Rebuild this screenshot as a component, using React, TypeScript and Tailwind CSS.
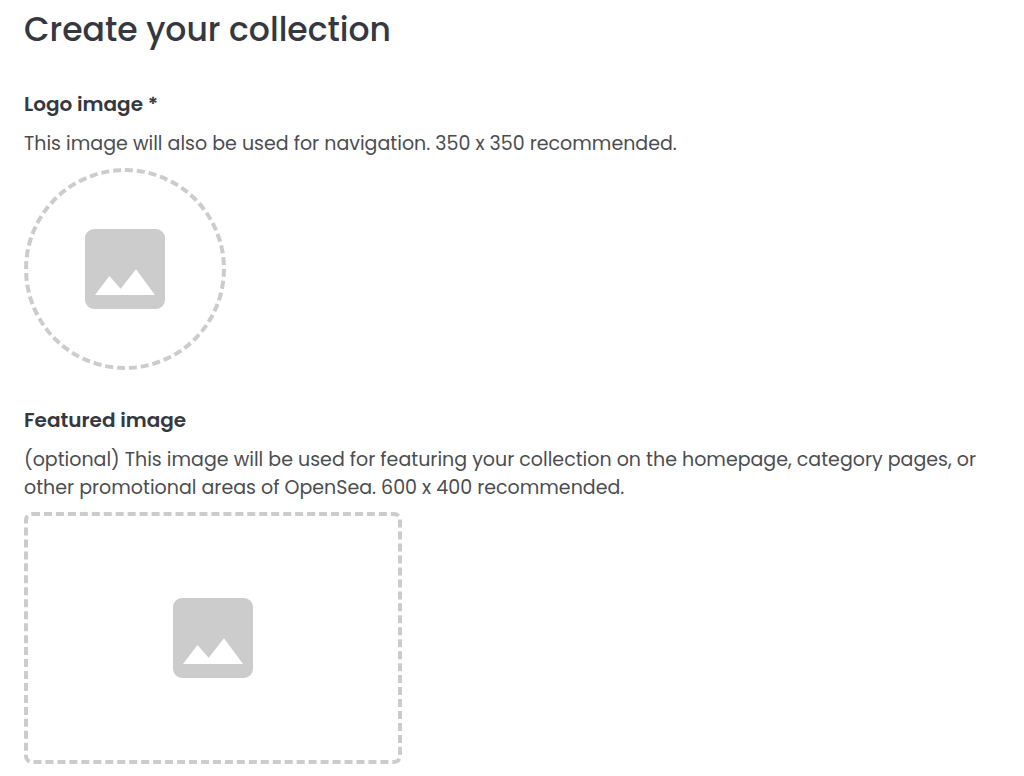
import React, { useRef } from "react";

function ImageIcon() {
  return (
    <svg viewBox="0 0 80 80" className="h-20 w-20" fill="#cccccc" aria-hidden="true">
      <path
        fillRule="evenodd"
        d="M9 0H71A9 9 0 0 1 80 9V71A9 9 0 0 1 71 80H9A9 9 0 0 1 0 71V9A9 9 0 0 1 9 0ZM10 66H70L51 40.3L35.7 59.7L24.4 47Z"
      />
    </svg>
  );
}

interface ImageFieldProps {
  id: string;
  title: string;
  hint: string;
  required?: boolean;
  shape: string;
}

function ImageField({ id, title, hint, required, shape }: ImageFieldProps) {
  const fileInput = useRef<HTMLInputElement>(null);

  return (
    <section className="flex flex-col items-start">
      <label htmlFor={id} className="text-[20px] leading-8 font-semibold text-[#353840]">
        {title}
        {required && " *"}
      </label>
      <p id={`${id}-hint`} className="mt-2.5 text-[19px] leading-7 text-[#4b4d50]">
        {hint}
      </p>
      <button
        id={id}
        type="button"
        aria-describedby={`${id}-hint`}
        onClick={() => fileInput.current?.click()}
        className={`mt-2.5 flex max-w-full cursor-pointer items-center justify-center border-4 border-dashed border-[#cccccc] ${shape}`}
      >
        <ImageIcon />
      </button>
      <input ref={fileInput} type="file" accept="image/*" hidden aria-labelledby={id} />
    </section>
  );
}

export default function App() {
  return (
    <main className="min-h-screen bg-white px-6 pt-1 pb-3 font-['Poppins','Inter',sans-serif]">
      <h1 className="text-[33px] leading-[52px] font-medium text-[#353840]">Create your collection</h1>
      <form className="mt-8 flex flex-col gap-[34px]">
        <ImageField
          id="logo-image"
          title="Logo image"
          required
          hint="This image will also be used for navigation. 350 x 350 recommended."
          shape="h-[202px] w-[202px] rounded-full"
        />
        <ImageField
          id="featured-image"
          title="Featured image"
          hint="(optional) This image will be used for featuring your collection on the homepage, category pages, or other promotional areas of OpenSea. 600 x 400 recommended."
          shape="h-[252px] w-[378px] rounded-lg"
        />
      </form>
    </main>
  );
}
